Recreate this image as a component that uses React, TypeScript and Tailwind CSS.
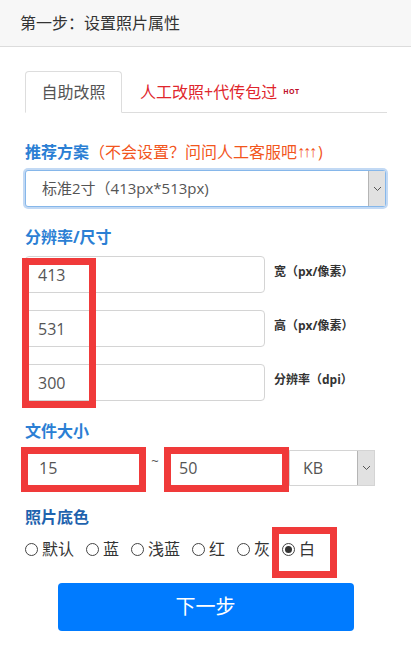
import React from "react";

const font = { fontFamily: '"Open Sans", "Noto Sans CJK SC", sans-serif' };

function Chevron() {
  return (
    <svg width="9" height="6" viewBox="0 0 9 6">
      <polyline points="1,1 4.5,4.5 8,1" fill="none" stroke="#555" strokeWidth="1" />
    </svg>
  );
}

function Radio({ label, checked }: { label: string; checked?: boolean }) {
  return (
    <div className="flex items-center">
      <span className="w-[13px] h-[13px] rounded-full border border-[#444] bg-white flex items-center justify-center">
        {checked && <span className="w-[7px] h-[7px] rounded-full bg-[#333]" />}
      </span>
      <span className="ml-[4px] text-[16px] leading-[22px] text-[#333]">{label}</span>
    </div>
  );
}

function SizeRow({ value, label, first }: { value: string; label: string; first?: boolean }) {
  return (
    <div className={`flex items-center ${first ? "mt-[8px]" : "mt-[17px]"}`}>
      <div className="w-[240px] h-[37px] border border-[#d4d4d4] rounded-[4px] flex items-center pl-[12px] text-[16px] text-[#555] bg-white">
        {value}
      </div>
      <div className="ml-[9px] -mt-[6px] text-[12px] font-bold text-[#333] leading-[16px]">{label}</div>
    </div>
  );
}

export default function App() {
  return (
    <div className="relative w-[411px] h-[667px] bg-white overflow-hidden" style={font}>
      <div className="h-[47px] bg-[#f7f7f7] border-b border-[#dcdcdc] flex items-center pl-[20px] text-[16px] text-[#333]">
        第一步：设置照片属性
      </div>

      <div className="pl-[25px] pr-[24px]">
        <div className="mt-[25px] h-[41px] flex items-end border-b border-[#ddd]">
          <div className="w-[97px] h-[42px] -mb-px border border-[#ddd] border-b-white rounded-t-[4px] bg-white flex items-center justify-center text-[16px] text-[#555]">
            自助改照
          </div>
          <div className="ml-[18px] h-[41px] flex items-center text-[16px] text-[#e0262c]">
            人工改照+代传包过
            <span className="ml-[6px] mt-[2px] text-[7px] font-bold text-[#c0102a] tracking-[0.5px]">HOT</span>
          </div>
        </div>

        <div className="mt-[28px] h-[22px] leading-[22px] text-[16px] flex items-center">
          <span className="font-bold text-[#2b7fd4]">推荐方案</span>
          <span className="text-[#f2561d]">（不会设置？问问人工客服吧</span>
          <span className="text-[#f2561d] text-[16px] tracking-[-2px]" style={{ fontFamily: '"Liberation Sans", sans-serif' }}>↑↑↑</span>
          <span className="text-[#f2561d] ml-[3px]">)</span>
        </div>

        <div className="mt-[7px] w-[361px] h-[37px] border border-[#86b7ea] rounded-[3px] shadow-[0_0_0_2px_rgba(120,170,230,0.45)] flex items-stretch bg-white">
          <div className="flex-1 flex items-center pl-[16px] text-[15px] text-[#555]">标准2寸（413px*513px)</div>
          <div className="w-[17px] bg-[#e1e1e1] border-l border-[#b5b5b5] flex items-center justify-center">
            <Chevron />
          </div>
        </div>

        <div className="mt-[19px] h-[22px] leading-[22px] text-[16px] font-bold text-[#2b7fd4]">分辨率/尺寸</div>

        <SizeRow first value="413" label="宽（px/像素）" />
        <SizeRow value="531" label="高（px/像素）" />
        <SizeRow value="300" label="分辨率（dpi）" />

        <div className="mt-[19px] h-[22px] leading-[22px] text-[16px] font-bold text-[#2b7fd4]">文件大小</div>

        <div className="mt-[8px] h-[36px] flex items-stretch">
          <div className="w-[117px] border border-[#d4d4d4] rounded-[4px] flex items-center pl-[13px] text-[16px] text-[#555]">15</div>
          <div className="w-[26px] flex justify-center pt-[2px] text-[13px] text-[#555]">~</div>
          <div className="w-[121px] border border-[#d4d4d4] rounded-[4px] flex items-center pl-[10px] text-[16px] text-[#555]">50</div>
          <div className="w-[86px] border border-[#d4d4d4] flex items-stretch">
            <div className="flex-1 flex items-center pl-[13px] text-[16px] text-[#555]">KB</div>
            <div className="w-[17px] bg-[#e1e1e1] border-l border-[#b5b5b5] flex items-center justify-center">
              <Chevron />
            </div>
          </div>
        </div>

        <div className="mt-[20px] h-[22px] leading-[22px] text-[16px] font-bold text-[#1f63ae]">照片底色</div>

        <div className="mt-[10px] h-[22px] flex items-center gap-[12px]">
          <Radio label="默认" />
          <Radio label="蓝" />
          <Radio label="浅蓝" />
          <Radio label="红" />
          <Radio label="灰" />
          <Radio label="白" checked />
        </div>
      </div>

      <div className="mt-[23px] mx-auto w-[296px] h-[48px] bg-[#007bff] rounded-[4px] flex items-center justify-center text-[20px] text-white">
        下一步
      </div>

      <div className="absolute left-[22px] top-[258px] w-[74px] h-[150px] border-[7px] border-[#f03a3a]" />
      <div className="absolute left-[21px] top-[447px] w-[125px] h-[45px] border-[7px] border-[#f03a3a]" />
      <div className="absolute left-[164px] top-[447px] w-[125px] h-[45px] border-[7px] border-[#f03a3a]" />
      <div className="absolute left-[272px] top-[527px] w-[65px] h-[51px] border-[7px] border-[#f03a3a]" />
    </div>
  );
}
